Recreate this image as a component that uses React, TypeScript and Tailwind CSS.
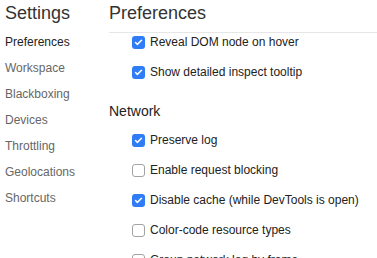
import { Check } from "lucide-react";

const sections = ["Preferences", "Workspace", "Blackboxing", "Devices", "Throttling", "Geolocations", "Shortcuts"];

function Box({ checked }: { checked: boolean }) {
  if (checked)
    return (
      <span className="flex h-[13px] w-[13px] shrink-0 items-center justify-center rounded-[3px] bg-[#2f7cf6]">
        <Check className="h-[9px] w-[9px] text-white" strokeWidth={4} />
      </span>
    );
  return <span className="h-[13px] w-[13px] shrink-0 rounded-[3px] border border-[#a3a3a3] bg-white" />;
}

function Row({ label, checked }: { label: string; checked: boolean }) {
  return (
    <div className="flex h-[18px] items-center gap-[5px] pl-[23px]">
      <Box checked={checked} />
      <span className="text-[12px] leading-[18px] text-[#222]">{label}</span>
    </div>
  );
}

export default function App() {
  return (
    <div className="flex h-[258px] w-[377px] overflow-hidden bg-white font-['Liberation_Sans',Arial,sans-serif]">
      <div className="w-[109px] shrink-0 pl-[5px]">
        <h1 className="pt-[2px] text-[18px] leading-[22px] text-[#333]">Settings</h1>
        <ul className="mt-[11px] flex flex-col gap-[12px]">
          {sections.map((s, i) => (
            <li key={s} className={`text-[12px] leading-[14px] ${i === 0 ? "text-[#222]" : "text-[#666]"}`}>
              {s}
            </li>
          ))}
        </ul>
      </div>
      <div className="flex-1">
        <h2 className="pt-[2px] text-[18px] leading-[22px] text-[#333]">Preferences</h2>
        <div className="mt-[8px] border-t border-[#e6e6e6]" />
        <div className="flex flex-col gap-[12px]">
          <Row label="Reveal DOM node on hover" checked />
          <Row label="Show detailed inspect tooltip" checked />
        </div>
        <h3 className="mt-[21px] text-[14px] leading-[18px] text-[#222]">Network</h3>
        <div className="mt-[11px] flex flex-col gap-[12px]">
          <Row label="Preserve log" checked />
          <Row label="Enable request blocking" checked={false} />
          <Row label="Disable cache (while DevTools is open)" checked />
          <Row label="Color-code resource types" checked={false} />
          <Row label="Group network log by frame" checked={false} />
        </div>
      </div>
    </div>
  );
}
